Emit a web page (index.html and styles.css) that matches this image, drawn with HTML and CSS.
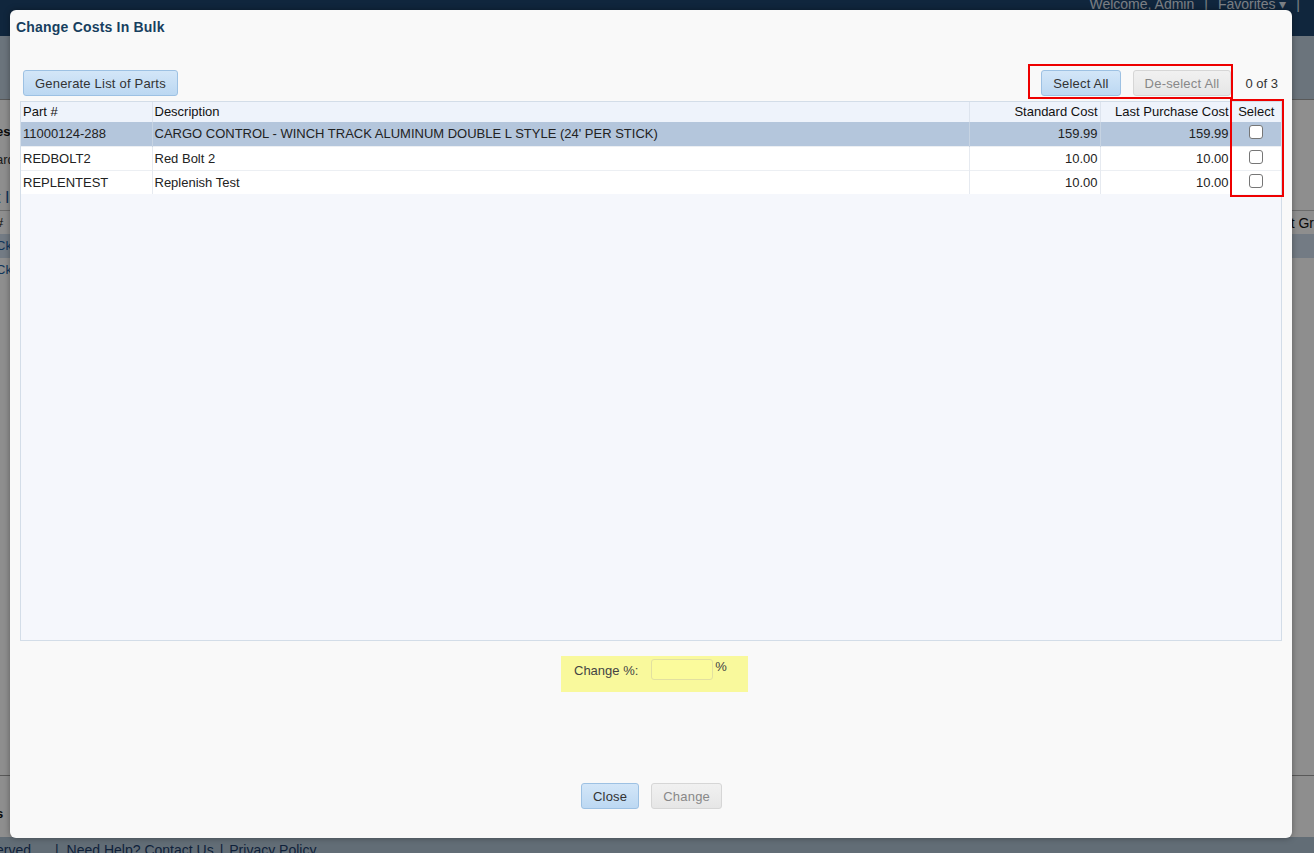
FILE: index.html
```html
<!DOCTYPE html>
<html lang="en">
<head>
    <meta charset="UTF-8">
    <title>Change Costs In Bulk</title>
    <link rel="stylesheet" href="styles.css">
</head>
<body>

    <!-- page behind the dialog -->
    <div class="page">
        <div class="topbar">
            <span class="topbar-link">Welcome, Admin</span>
            <span class="topbar-sep">|</span>
            <span class="topbar-link">Favorites &#9662;</span>
            <span class="topbar-sep">|</span>
        </div>
        <div class="subbar"></div>
        <div class="page-body">
            <div class="page-line strong">es</div>
            <div class="page-line">ard</div>
            <div class="page-line link">t I</div>
            <div class="page-line head">#<span class="right-text">t Gr</span></div>
            <div class="page-line row hl">Ck</div>
            <div class="page-line row">Ck</div>
        </div>
        <div class="page-bottom">
            <div class="page-line strong">s</div>
        </div>
        <div class="footer">
            <span>erved.</span>
            <span class="fsep">|</span>
            <span class="flink">Need Help? Contact Us</span>
            <span class="fsep fsep-2">|</span>
            <span class="flink">Privacy Policy</span>
        </div>
    </div>
    <div class="overlay"></div>

    <div class="dialog">
        <h1 class="dialog-title">Change Costs In Bulk</h1>

        <div class="toolbar">
            <button class="btn">Generate List of Parts</button>
            <div class="toolbar-right">
                <div class="mark mark-buttons">
                    <button class="btn">Select All</button>
                    <button class="btn" disabled>De-select All</button>
                </div>
                <span class="count">0 of 3</span>
            </div>
        </div>

        <div class="grid">
            <table class="parts">
                <thead>
                    <tr>
                        <th class="c-part">Part #</th>
                        <th class="c-desc">Description</th>
                        <th class="c-num">Standard Cost</th>
                        <th class="c-num">Last Purchase Cost</th>
                        <th class="c-sel">Select</th>
                    </tr>
                </thead>
                <tbody>
                    <tr class="selected">
                        <td>11000124-288</td>
                        <td>CARGO CONTROL - WINCH TRACK ALUMINUM DOUBLE L STYLE (24' PER STICK)</td>
                        <td class="c-num">159.99</td>
                        <td class="c-num">159.99</td>
                        <td class="c-sel"><input type="checkbox"></td>
                    </tr>
                    <tr>
                        <td>REDBOLT2</td>
                        <td>Red Bolt 2</td>
                        <td class="c-num">10.00</td>
                        <td class="c-num">10.00</td>
                        <td class="c-sel"><input type="checkbox"></td>
                    </tr>
                    <tr>
                        <td>REPLENTEST</td>
                        <td>Replenish Test</td>
                        <td class="c-num">10.00</td>
                        <td class="c-num">10.00</td>
                        <td class="c-sel"><input type="checkbox"></td>
                    </tr>
                </tbody>
            </table>
            <div class="mark mark-column"></div>
        </div>

        <div class="change-row">
            <div class="change-box">
                <label for="pct">Change %:</label>
                <input type="text" id="pct" class="pct-input">
                <span class="pct-sign">%</span>
            </div>
        </div>

        <div class="dialog-buttons">
            <button class="btn">Close</button>
            <button class="btn" disabled>Change</button>
        </div>
    </div>

</body>
</html>
```

FILE: styles.css
```css
/* Basic Reset */
* {
    margin: 0;
    padding: 0;
    box-sizing: border-box;
}

body {
    font-family: "Liberation Sans", Arial, sans-serif;
    font-size: 13px;
    color: #333;
    width: 1314px;
    height: 853px;
    overflow: hidden;
    position: relative;
    background-color: #e8e8e8;
}

/* --- background page --- */
.page {
    height: 853px;
    display: flex;
    flex-direction: column;
}

.topbar {
    height: 36px;
    background-color: #1d4369;
    display: flex;
    justify-content: flex-end;
    align-items: flex-start;
    gap: 10px;
    padding-right: 14px;
    color: #d6dde5;
    font-size: 14px;
    line-height: 8px;
}

.subbar {
    height: 64px;
    background-color: #b9c8d6;
    border-bottom: 1px solid #999;
}

.page-body {
    flex: 1;
    background-color: #f4f4f4;
    padding-top: 20px;
}

.page-line {
    height: 24px;
    line-height: 24px;
    font-size: 13px;
    color: #333;
    margin-left: -4px;
    position: relative;
}

.page-line.strong {
    font-weight: bold;
    color: #111;
    margin-bottom: 4px;
}

.page-line.link {
    color: #1a5b9c;
    font-size: 16px;
    margin-top: 14px;
}

.page-line.head {
    border-top: 1px solid #bbb;
    color: #111;
}

.right-text {
    position: absolute;
    right: 0;
    top: 0;
    font-size: 14px;
}

.page-line.row {
    color: #1a5b9c;
}

.page-line.hl {
    background-color: #c7d4e4;
}

.page-bottom {
    height: 62px;
    background-color: #f4f4f4;
    border-top: 1px solid #999;
    padding-top: 26px;
}

.footer {
    height: 16px;
    background-color: #a9bccc;
    color: #1a3a66;
    font-size: 14px;
    line-height: 26px;
    overflow: hidden;
    margin-left: -4px;
    display: flex;
    white-space: nowrap;
}

.fsep {
    margin: 0 8px 0 20px;
}

.fsep-2 {
    margin: 0 6px;
}

.overlay {
    position: absolute;
    inset: 0;
    background-color: rgba(0, 0, 0, 0.42);
}

/* --- dialog --- */
.dialog {
    position: absolute;
    left: 10px;
    top: 10px;
    width: 1282px;
    height: 828px;
    background-color: #f9f9f9;
    border-radius: 6px;
    box-shadow: 0 0 6px rgba(0, 0, 0, 0.35);
    padding: 0 10px;
    display: flex;
    flex-direction: column;
}

.dialog-title {
    font-size: 14px;
    font-weight: bold;
    letter-spacing: 0.2px;
    color: #173f5f;
    padding-top: 9px;
    margin-left: -4px;
    height: 55px;
    line-height: 16px;
}

.toolbar {
    display: flex;
    justify-content: space-between;
    align-items: center;
    height: 36px;
    padding-left: 3px;
}

.toolbar-right {
    display: flex;
    align-items: center;
}

.count {
    margin-left: 12px;
    margin-right: 4px;
}

.btn {
    font-family: inherit;
    font-size: 13px;
    letter-spacing: 0.2px;
    color: #333;
    height: 26px;
    padding: 0 11px;
    border: 1px solid #9dc1e3;
    border-radius: 3px;
    background: linear-gradient(#d3e6f8, #bcd8f2);
    cursor: pointer;
}

.btn:disabled {
    color: #888;
    border-color: #d6d6d6;
    background: linear-gradient(#f1f1f1, #e6e6e6);
    cursor: default;
}

.mark {
    border: 2px solid #ee0000;
}

.mark-buttons {
    display: flex;
    gap: 12px;
    padding: 4px 0 0 11px;
    height: 35px;
    margin-top: -3px;
}

.grid {
    position: relative;
    height: 540px;
    border: 1px solid #d3dde8;
    background-color: #f5f7fc;
}

.parts {
    width: 100%;
    border-collapse: collapse;
}

.parts th {
    background-color: #eef3fb;
    font-weight: normal;
    color: #111;
    text-align: left;
    height: 20px;
    line-height: 18px;
    padding: 0 2px;
    border-right: 1px solid #dde4ee;
}

.parts td {
    background-color: #fff;
    color: #222;
    height: 24px;
    padding: 0 2px;
    border-right: 1px solid #e6eaf0;
    border-top: 1px solid #eceff3;
}

.parts tr.selected td {
    background-color: #b4c6dc;
    border-top: none;
    border-right-color: #c6d3e2;
}

.parts .c-part {
    width: 131px;
}

.parts .c-num {
    width: 131px;
    text-align: right;
}

.parts .c-sel {
    width: 50px;
    text-align: center;
    border-right: none;
}

.parts input[type="checkbox"] {
    appearance: none;
    display: block;
    width: 14px;
    height: 14px;
    margin: -3px 0 0 15px;
    border: 1px solid #767676;
    border-radius: 3px;
    background-color: #fff;
}

.mark-column {
    position: absolute;
    right: -3px;
    top: -3px;
    width: 54px;
    height: 98px;
}

.change-row {
    display: flex;
    justify-content: center;
    padding: 15px 0 0 7px;
    height: 142px;
}

.change-box {
    background-color: #f9f99c;
    width: 187px;
    height: 36px;
    display: flex;
    align-items: flex-start;
    padding: 3px 0 0 13px;
    color: #444;
}

.change-box label {
    line-height: 24px;
    margin-right: 13px;
}

.pct-input {
    width: 62px;
    height: 21px;
    border: 1px solid #e2e0a0;
    border-radius: 3px;
    background-color: #fbfb9c;
}

.pct-sign {
    margin-left: 2px;
    line-height: 16px;
}

.dialog-buttons {
    display: flex;
    justify-content: center;
    gap: 12px;
    padding-left: 1px;
}
```
